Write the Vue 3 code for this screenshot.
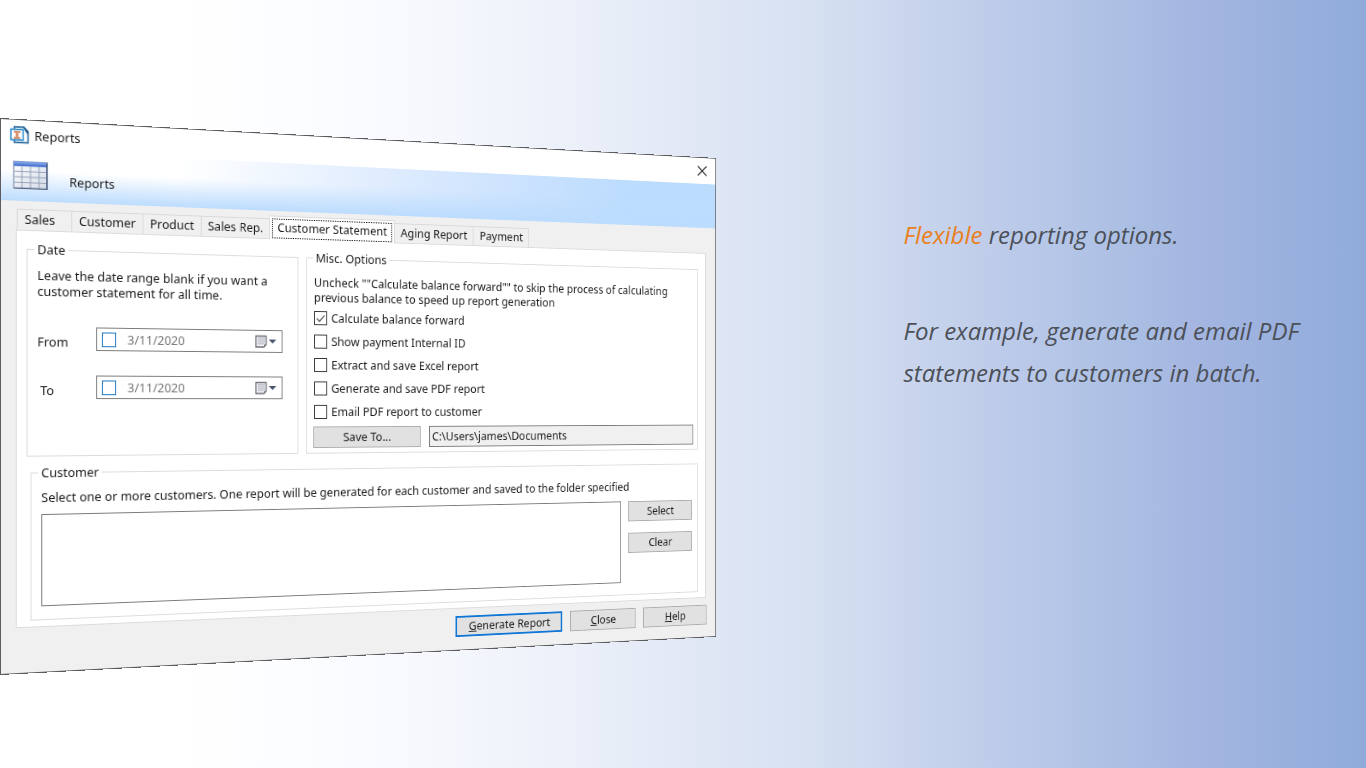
<script setup>
import { ref } from 'vue'

const tabs = ['Sales', 'Customer', 'Product', 'Sales Rep.', 'Customer Statement', 'Aging Report', 'Payment']
const activeTab = ref('Customer Statement')

const dates = ref([
  { id: 'from', label: 'From', value: '3/11/2020', enabled: false },
  { id: 'to', label: 'To', value: '3/11/2020', enabled: false },
])

const options = ref([
  { id: 'forward', label: 'Calculate balance forward', checked: true },
  { id: 'internal', label: 'Show payment Internal ID', checked: false },
  { id: 'excel', label: 'Extract and save Excel report', checked: false },
  { id: 'pdf', label: 'Generate and save PDF report', checked: false },
  { id: 'email', label: 'Email PDF report to customer', checked: false },
])

const folder = ref('C:\\Users\\james\\Documents')
</script>

<template>
  <main class="slide">
    <section class="dialog" role="dialog" aria-labelledby="dialog-title">
      <header class="titlebar">
        <svg class="app-icon" viewBox="0 0 20 18" aria-hidden="true">
          <path d="M4.500 1h9.500l4.500 4.500V16.500h-14z" fill="#fff" stroke="#1d5f99" stroke-width="1.400" />
          <path d="M13 0.500h1.500l4.500 4.500v2.500h-1.500z" fill="#174f80" />
          <path d="M1 3.500h12.500v10.500H1z" fill="#fff" stroke="#2488c8" stroke-width="1.400" />
          <path d="M4 5h6.500v2H8.700v4h1.800v2H4v-2h1.800V7H4z" fill="#d8946f" />
        </svg>
        <h1 id="dialog-title">Reports</h1>
        <button class="close" type="button" aria-label="Close window">
          <svg viewBox="0 0 14 14" aria-hidden="true"><path d="M1 1.500l12 11M13 1.500l-12 11" stroke="#222" stroke-width="1.300" /></svg>
        </button>
      </header>

      <div class="banner">
        <svg class="grid-icon" viewBox="0 0 34 27" aria-hidden="true">
          <defs>
            <linearGradient id="cells" x1="0" y1="0" x2="1" y2="1">
              <stop offset="0" stop-color="#fff" />
              <stop offset="1" stop-color="#d3dbe8" />
            </linearGradient>
            <linearGradient id="head" x1="0" y1="0" x2="0" y2="1">
              <stop offset="0" stop-color="#8fb0f2" />
              <stop offset="1" stop-color="#3c66c9" />
            </linearGradient>
          </defs>
          <rect x="0.500" y="0.500" width="33" height="26" fill="url(#cells)" stroke="#7d8cab" />
          <rect x="0.500" y="0.500" width="33" height="4.500" fill="url(#head)" />
          <path d="M8.500 5v21M17 5v21M25.500 5v21M1 10.200h32M1 15.500h32M1 20.800h32" stroke="#9aa5bb" />
          <path d="M33.200 1v25.500H1" fill="none" stroke="#4f5f80" stroke-width="1.300" />
        </svg>
        <p>Reports</p>
      </div>

      <div class="tabs" role="tablist">
        <button
          v-for="tab in tabs"
          :key="tab"
          type="button"
          role="tab"
          class="tab"
          :class="{ active: tab === activeTab }"
          :aria-selected="tab === activeTab"
          @click="activeTab = tab"
        ><span>{{ tab }}</span></button>
      </div>

      <div class="panel" role="tabpanel">
        <div class="columns">
          <fieldset>
            <legend>Date</legend>
            <p class="note">Leave the date range blank if you want a<br>customer statement for all time.</p>
            <div class="dates">
              <div v-for="d in dates" :key="d.id" class="date-row">
                <label :for="d.id" :class="d.id">{{ d.label }}</label>
                <div class="picker">
                  <input v-model="d.enabled" type="checkbox" :aria-label="'Use ' + d.label + ' date'">
                  <input :id="d.id" v-model="d.value" type="text">
                  <button type="button" :aria-label="'Choose ' + d.label + ' date'">
                    <svg viewBox="0 0 26 14" aria-hidden="true">
                      <path d="M1 1.500h11.500v9l-2.500 2.500H1z" fill="#f3f4f7" stroke="#6f6f78" stroke-width="1.300" />
                      <path d="M3 3.500h8M3 5.500h8M3 7.500h8M3 9.500h7M4 3v8M6 3v8M8 3v8M10 3v7" stroke="#b4b7c2" stroke-width="0.700" />
                      <path d="M12.500 10.500h-2.500v2.500z" fill="#6f6f78" />
                      <path d="M15.500 5h8.500l-4.250 4.200z" fill="#46536f" />
                    </svg>
                  </button>
                </div>
              </div>
            </div>
          </fieldset>

          <fieldset class="misc">
            <legend>Misc. Options</legend>
            <p class="note">Uncheck ""Calculate balance forward"" to skip the process of calculating<br>previous balance to speed up report generation</p>
            <ul class="options">
              <li v-for="o in options" :key="o.id">
                <label><input v-model="o.checked" type="checkbox">{{ o.label }}</label>
              </li>
            </ul>
            <div class="save-row">
              <button class="btn save" type="button">Save To...</button>
              <input v-model="folder" class="path" type="text" readonly aria-label="Report folder">
            </div>
          </fieldset>
        </div>

        <fieldset class="customer">
          <legend>Customer</legend>
          <p class="note">Select one or more customers. One report will be generated for each customer and saved to the folder specified</p>
          <div class="picked">
            <textarea aria-label="Selected customers" readonly></textarea>
            <div class="side">
              <button class="btn" type="button">Select</button>
              <button class="btn" type="button">Clear</button>
            </div>
          </div>
        </fieldset>
      </div>

      <footer class="actions">
        <button class="btn primary" type="button"><u>G</u>enerate Report</button>
        <button class="btn" type="button"><u>C</u>lose</button>
        <button class="btn" type="button"><u>H</u>elp</button>
      </footer>
    </section>

    <section class="copy">
      <p><em>Flexible</em> reporting options.</p>
      <p>For example, generate and email PDF statements to customers in batch.</p>
    </section>
  </main>
</template>

<style>
body {
  margin: 0;
}
</style>

<style scoped>
* {
  box-sizing: border-box;
}

.slide {
  display: flex;
  align-items: flex-start;
  min-height: 100vh;
  padding-top: 118px;
  overflow: hidden;
  background: linear-gradient(90deg, #fff 0%, #fff 12%, #fcfdff 21%, #f8f9fe 30%, #f1f5fb 36%, #eaeff9 43%, #e2e8f5 50%, #d9e3f3 57%, #d0dcef 63%, #cbd6ee 66%, #c3d1eb 70%, #bccaea 74%, #b2c4e6 79%, #aabee3 83%, #a5b7e1 87%, #9db2df 92%, #8fabda 100%);
}

.dialog {
  display: flex;
  flex: none;
  flex-direction: column;
  width: 61.6%;
  border: 1px solid #5c5c60;
  background: #f0f0f0;
  color: #1a1a1a;
  font: 13px/17px "Noto Sans", "Open Sans", sans-serif;
  transform: perspective(718px) rotateY(8deg);
  transform-origin: 0 285px;
}

button,
input,
textarea {
  margin: 0;
  color: inherit;
  font: inherit;
}

p,
h1,
ul {
  margin: 0;
  padding: 0;
}

.titlebar {
  display: flex;
  align-items: center;
  height: 30px;
  padding: 0 11px 0 9px;
  background: #fff;
}

.app-icon {
  width: 20px;
  height: 18px;
}

h1 {
  margin-left: 5px;
  font-size: 13px;
  font-weight: 400;
}

.close {
  width: 14px;
  height: 14px;
  margin-left: auto;
  padding: 0;
  border: 0;
  background: none;
}

.close svg {
  display: block;
}

.banner {
  display: flex;
  align-items: center;
  gap: 22px;
  height: 51px;
  padding: 0 0 2px 12px;
  background:
    linear-gradient(180deg, transparent 40%, #bcdcfe 100%),
    linear-gradient(90deg, #fff 22%, #dfecfe 50%, #cde3fe 68%, #bcdcfe 86%);
}

.banner p {
  padding-top: 12px;
}

.grid-icon {
  width: 36px;
  height: 28px;
}

.tabs {
  display: flex;
  align-items: flex-end;
  height: 29px;
  padding-left: 16px;
}

.tab {
  height: 21px;
  min-width: 57px;
  padding: 0 7px 1px;
  border: 1px solid #d9d9d9;
  border-width: 1px 1px 0 0;
  background: #f0f0f0;
  text-align: left;
}

.tab:first-child {
  border-left-width: 1px;
}

.tab.active {
  z-index: 1;
  height: 25px;
  margin-bottom: -1px;
  padding: 0 2px;
  background: #fff;
}

.tab.active span {
  display: block;
  padding: 0 5px 2px;
  border: 1px dotted #000;
}

.panel {
  display: flex;
  flex-direction: column;
  gap: 8px;
  margin: 0 13px 0 15px;
  padding: 10px 10px 6px;
  border: 1px solid #dcdcdc;
  background: #fff;
}

.columns {
  display: grid;
  grid-template-columns: minmax(0, 3fr) minmax(0, 5fr);
  gap: 9px;
}

fieldset {
  min-width: 0;
  margin: 0;
  padding: 0 6px 5px;
  border: 1px solid #dcdcdc;
}

legend {
  margin-left: 1px;
  padding: 0 3px;
}

.note {
  padding: 9px 0 0 4px;
  line-height: 16px;
  white-space: nowrap;
}

.misc {
  padding: 0 5px 5px 7px;
}

.misc legend {
  margin-left: 0;
}

.misc .note {
  padding-left: 1px;
}

.dates {
  display: grid;
  gap: 25px;
  padding: 28px 11px 0 4px;
}

.date-row {
  display: flex;
  align-items: center;
  height: 24px;
}

.date-row label {
  width: 61px;
  padding-top: 6px;
}

.date-row label.to {
  padding-left: 3px;
}

.picker {
  display: flex;
  flex: 1;
  align-items: center;
  min-width: 0;
  height: 24px;
  padding: 0 4px 0 5px;
  border: 1px solid #7a7a7a;
  background: #fff;
}

input[type='checkbox'] {
  flex: none;
  width: 15px;
  height: 15px;
  border: 1px solid #333;
  background: #fff;
  appearance: none;
}

.options input:checked {
  position: relative;
}

.options input:checked::after {
  position: absolute;
  top: 1px;
  left: 4px;
  width: 4px;
  height: 8px;
  border: solid #222;
  border-width: 0 1px 1px 0;
  transform: rotate(42deg);
  content: '';
}

.picker input[type='checkbox'] {
  border: 1px solid #1a75c4;
}

.picker input[type='text'] {
  flex: 1;
  width: 0;
  padding: 0 0 0 12px;
  border: 0;
  background: none;
  color: #757575;
}

.picker button {
  width: 26px;
  height: 14px;
  padding: 0;
  border: 0;
  background: none;
}

.picker svg {
  display: block;
}

.options {
  padding: 2px 0 0 1px;
  list-style: none;
}

.options label {
  display: flex;
  align-items: center;
  gap: 5px;
  height: 25px;
}

.save-row {
  display: flex;
  gap: 10px;
  padding: 3px 0 0;
}

.btn {
  height: 23px;
  padding: 0;
  border: 1px solid #adadad;
  background: #e1e1e1;
}

.save {
  width: 126px;
}

.path {
  flex: 1;
  height: 23px;
  padding: 0 3px 2px;
  border: 1px solid #7a7a7a;
  background: #f0f0f0;
}

.customer {
  margin-left: 4px;
}

.customer .note {
  padding-top: 8px;
}

.picked {
  display: flex;
  gap: 9px;
  padding: 9px 1px 8px 4px;
}

textarea {
  flex: 1;
  height: 93px;
  border: 1px solid #7a7a7a;
  background: #fff;
  resize: none;
}

.side {
  display: grid;
  gap: 13px;
  align-content: start;
  width: 85px;
}

.actions {
  display: flex;
  justify-content: flex-end;
  gap: 10px;
  padding: 8px 12px 14px;
}

.actions .btn {
  width: 85px;
}

.actions .primary {
  width: 133px;
  border: 2px solid #1177d6;
}

.copy {
  flex: 1;
  padding: 96px 40px 0 62px;
  color: #4c5058;
  font: italic 400 24px/42px "Open Sans", "Noto Sans", sans-serif;
}

.copy p + p {
  margin-top: 54px;
}

.copy em {
  color: #ea7f1e;
}
</style>
